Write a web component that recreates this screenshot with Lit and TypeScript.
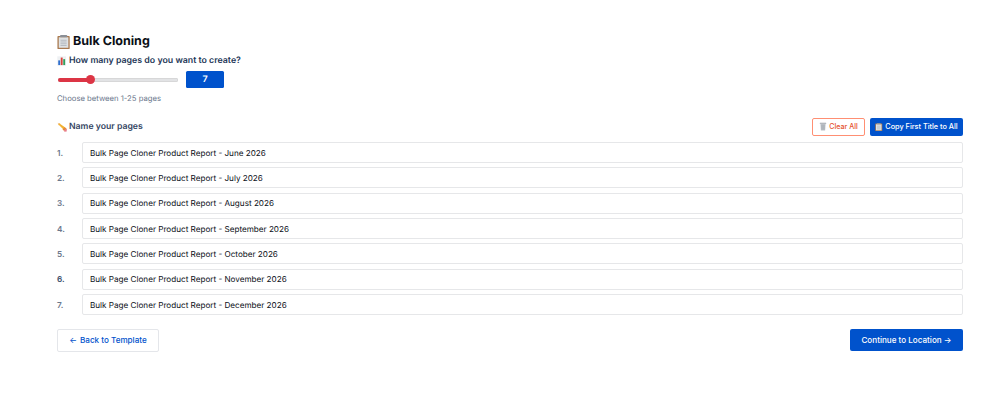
import { LitElement, html, css } from "lit";
import { customElement } from "lit/decorators.js";

const clipboard = (s: number) => html`<svg class="ico" width=${s} height=${s} viewBox="0 0 16 16">
  <rect x="0.5" y="1" width="14" height="15" rx="1" fill="#a9794f"/>
  <rect x="2" y="2.6" width="11" height="12" fill="#dfe2e4"/>
  <rect x="3.5" y="0" width="8" height="2.6" rx=".5" fill="#8a8f96"/>
  <path d="M4 6h7M4 8h7M4 10h7M4 12h7" stroke="#a5abb2" stroke-width=".8"/>
</svg>`;
const chart = html`<svg class="ico" width="10" height="10" viewBox="0 0 16 16">
  <rect x="0.5" y="0.5" width="14" height="15" fill="#eef1f3"/>
  <rect x="2" y="7" width="3" height="7.5" fill="#2f6fce"/>
  <rect x="6" y="2.5" width="3" height="12" fill="#d8413a"/>
  <rect x="10" y="5" width="3" height="9.5" fill="#2f9e5b"/>
</svg>`;
const pencil = html`<svg class="ico" width="10" height="10" viewBox="0 0 16 16">
  <path d="M1 1l4.6 1.6L2.6 5.6z" fill="#f3cda6"/>
  <path d="M3.6 1.9L1.9 3.6 11.5 13.2l3-.4.3-3z" fill="#f2b233"/>
  <path d="M12.2 8.2l2.6 2.6-3.4 3.4-2.6-2.6z" fill="#e58a3a"/>
  <path d="M11.8 13.2l2.9-2.9 1 1.1-.2 3.9-3.9.3z" fill="#e87c8a"/>
</svg>`;
const trash = html`<svg class="ico" width="8" height="9" viewBox="0 0 12 14">
  <rect x="1" y="1.2" width="10" height="1.6" rx=".5" fill="#9aa1a8"/>
  <path d="M2 3.2h8l-.7 10H2.7z" fill="#bcc2c8"/>
  <path d="M4.2 4.5v7.5M6 4.5v7.5M7.8 4.5v7.5" stroke="#9aa1a8" stroke-width=".7"/>
</svg>`;

const titles = ["June", "July", "August", "September", "October", "November", "December"];

@customElement("app-root")
export class AppRoot extends LitElement {
  static styles = css`
    :host {
      display: block;
      box-sizing: border-box;
      width: 999px;
      height: 410px;
      padding: 33px 36px 0 57px;
      background: #fff;
      font-family: Inter, "Liberation Sans", sans-serif;
      text-rendering: geometricPrecision;
      overflow: hidden;
    }
    .ico { display: inline-block; flex: none; }
    h1 {
      display: flex; align-items: center; gap: 2px;
      margin: 0; font-size: 12.5px; line-height: 18px; font-weight: 700; color: #0b0f17;
    }
    .q {
      display: flex; align-items: center; gap: 2px;
      margin-top: 3px; font-size: 8.8px; line-height: 14px; font-weight: 600; color: #253858;
    }
    .slider { display: flex; align-items: center; gap: 8px; margin: 3px 0 0 1px; height: 17px; }
    .track {
      position: relative; width: 120px; height: 4px; border-radius: 2px;
      background: #e2e3e5; box-shadow: inset 0 0 0 .5px #ccc;
    }
    .fill { height: 4px; width: 33px; border-radius: 2px; background: #dc3545; }
    .thumb {
      position: absolute; left: 28px; top: -2.5px; width: 9px; height: 9px;
      border-radius: 50%; background: #dc3545;
    }
    .value {
      width: 38px; height: 17px; border-radius: 1.5px; background: #0052cc; color: #fff;
      font-size: 9px; font-weight: 600; display: flex; align-items: center; justify-content: center;
    }
    .hint { margin-top: 5px; font-size: 7.7px; line-height: 12px; color: #6b778c; }
    .head {
      display: flex; align-items: center; justify-content: space-between;
      margin-top: 12px; height: 19px;
    }
    .name {
      display: flex; align-items: center; gap: 2px;
      font-size: 8.7px; font-weight: 600; color: #344563;
    }
    .tools { display: flex; gap: 5px; align-items: center; }
    button {
      font-family: inherit; display: inline-flex; align-items: center; justify-content: center;
      padding: 0; border-radius: 2px; box-sizing: border-box; font-weight: 500;
    }
    .clear {
      width: 53px; height: 18px; gap: 2px; font-size: 7.1px; background: #fff;
      border: 1px solid #ff8f73; color: #e5532d;
    }
    .copy {
      width: 93px; height: 18px; gap: 2px; font-size: 7.3px; background: #0052cc;
      border: 0; color: #fff;
    }
    .rows { display: flex; flex-direction: column; gap: 4.35px; margin-top: 6px; }
    .row { display: flex; align-items: center; }
    .num { width: 25px; font-size: 8.2px; font-weight: 600; color: #6b778c; }
    .row:nth-child(6) .num { color: #42526e; }
    .field {
      flex: 1; height: 21px; box-sizing: border-box; border: 1px solid #e6e7e9; border-radius: 2px;
      padding: 0 7px; display: flex; align-items: center; font-size: 8.15px; color: #0b0f17;
    }
    .nav { display: flex; justify-content: space-between; margin-top: 13.5px; }
    .back {
      width: 102px; height: 23px; gap: 3px; font-size: 8.1px; background: #fff;
      border: 1px solid #e4e6ea; color: #0052cc;
    }
    .next {
      width: 113px; height: 22px; font-size: 8.1px; background: #0052cc; border: 0; color: #fff;
    }
  `;

  render() {
    return html`
      <h1>${clipboard(14)}<span>Bulk Cloning</span></h1>
      <div class="q">${chart}<span>How many pages do you want to create?</span></div>
      <div class="slider">
        <div class="track"><div class="fill"></div><div class="thumb"></div></div>
        <div class="value">7</div>
      </div>
      <div class="hint">Choose between 1-25 pages</div>
      <div class="head">
        <div class="name">${pencil}<span>Name your pages</span></div>
        <div class="tools">
          <button class="clear">${trash}<span>Clear All</span></button>
          <button class="copy">${clipboard(8)}<span>Copy First Title to All</span></button>
        </div>
      </div>
      <div class="rows">
        ${titles.map((m, i) => html`<div class="row">
          <div class="num">${i + 1}.</div>
          <div class="field">Bulk Page Cloner Product Report - ${m} 2026</div>
        </div>`)}
      </div>
      <div class="nav">
        <button class="back"><span>←</span><span>Back to Template</span></button>
        <button class="next">Continue to Location →</button>
      </div>
    `;
  }
}
